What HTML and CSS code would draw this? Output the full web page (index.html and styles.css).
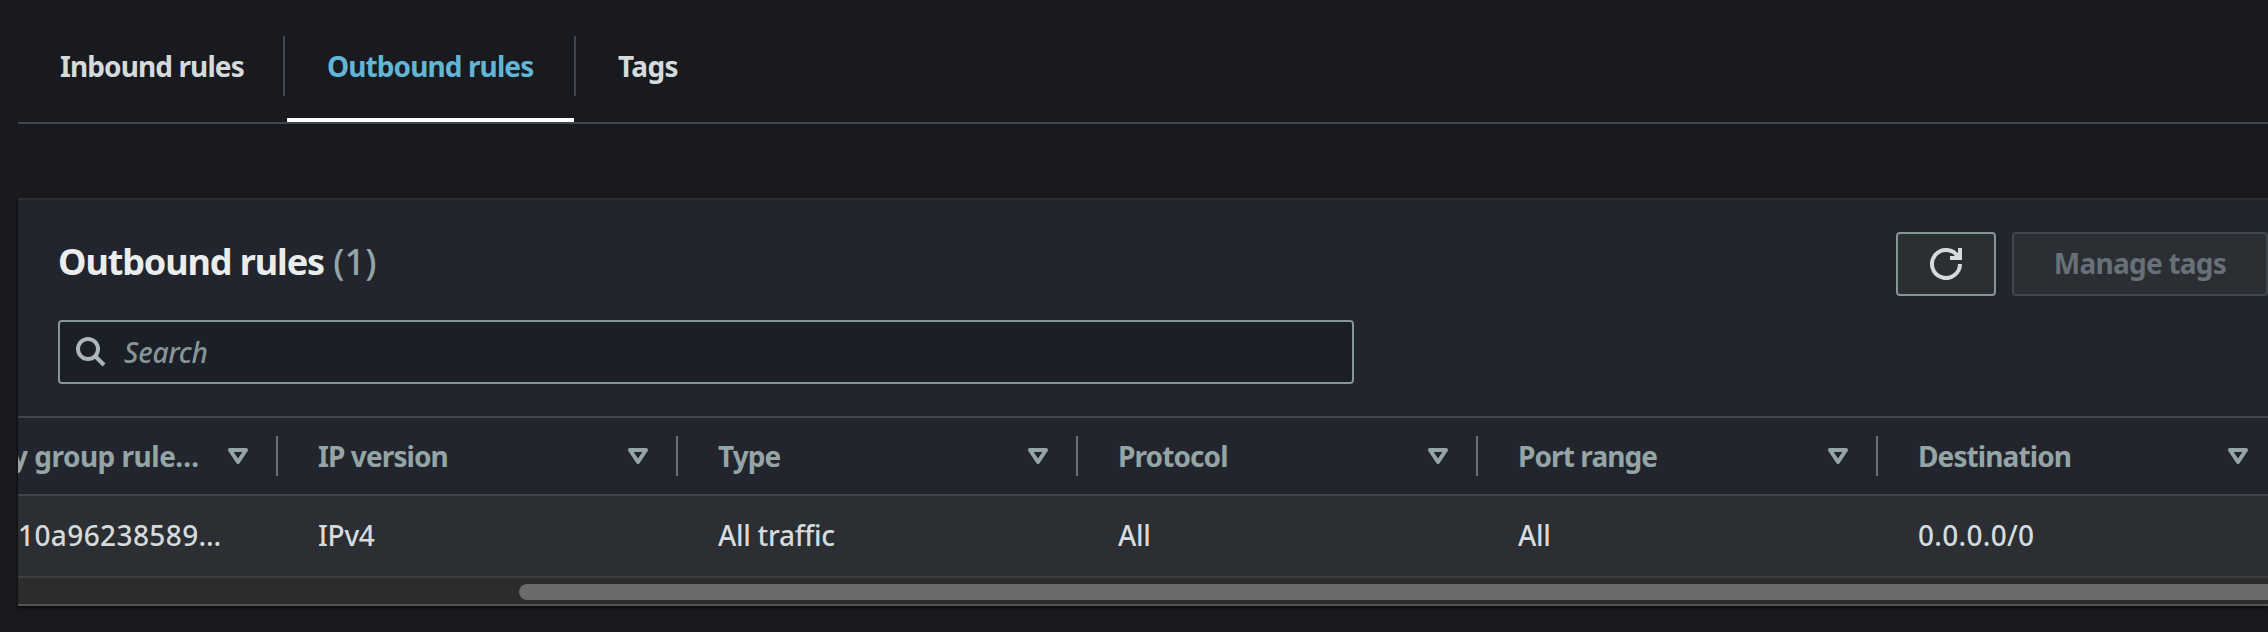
FILE: index.html
```html
<!DOCTYPE html>
<html lang="en">
  <head>
    <meta charset="UTF-8" />
    <meta name="viewport" content="width=device-width, initial-scale=1.0" />
    <title>Outbound rules</title>
    <link rel="stylesheet" href="styles.css">
  </head>
  <body>
    <svg class="sprite" aria-hidden="true">
      <symbol id="sort" viewBox="0 0 20 16">
        <path d="M2 2h16l-8 12z" fill="none" stroke="currentColor" stroke-width="4" stroke-linejoin="round" />
      </symbol>
    </svg>
    <nav class="tabs">
      <a class="tab">Inbound rules</a>
      <a class="tab active">Outbound rules</a>
      <a class="tab">Tags</a>
    </nav>
    <section class="panel">
      <header class="panel-header">
        <h2>Outbound rules <span class="count">(1)</span></h2>
        <div class="actions">
          <button class="btn btn-icon" aria-label="Refresh">
            <svg width="32" height="32" viewBox="0 0 32 32" fill="none" stroke="currentColor" stroke-width="4">
              <path d="M30 16a14 14 0 1 1-1.900-7" />
              <path d="M30 0v10H20" />
            </svg>
          </button>
          <button class="btn btn-text" disabled>Manage tags</button>
        </div>
      </header>
      <div class="search">
        <svg width="30" height="30" viewBox="0 0 30 30" fill="none" stroke="currentColor" stroke-width="4">
          <circle cx="12" cy="12" r="10" />
          <path d="M19 19l9 9" />
        </svg>
        <span class="placeholder">Search</span>
      </div>
      <div class="table">
        <div class="row head">
          <div class="cell first"><span>y group rule…</span><svg class="sort"><use href="#sort" /></svg></div>
          <div class="cell"><span>IP version</span><svg class="sort"><use href="#sort" /></svg></div>
          <div class="cell"><span>Type</span><svg class="sort"><use href="#sort" /></svg></div>
          <div class="cell"><span>Protocol</span><svg class="sort"><use href="#sort" /></svg></div>
          <div class="cell"><span>Port range</span><svg class="sort"><use href="#sort" /></svg></div>
          <div class="cell"><span>Destination</span><svg class="sort"><use href="#sort" /></svg></div>
        </div>
        <div class="row body">
          <div class="cell first">10a96238589…</div>
          <div class="cell">IPv4</div>
          <div class="cell">All traffic</div>
          <div class="cell">All</div>
          <div class="cell">All</div>
          <div class="cell address">0.0.0.0/0</div>
        </div>
      </div>
      <div class="scrollbar"><div class="thumb"></div></div>
    </section>
  </body>
</html>
```

FILE: styles.css
```css
* {
  box-sizing: border-box;
}
body {
  margin: 0;
  padding-left: 18px;
  height: 632px;
  overflow: hidden;
  background: #191a1f;
  color: #d5dbdb;
  font-family: "Noto Sans", "Open Sans", sans-serif;
  font-size: 28px;
  line-height: 40px;
}
.sprite {
  display: none;
}
.tabs {
  display: flex;
  height: 124px;
  padding-top: 36px;
  border-bottom: 2px solid #414550;
}
.tab {
  position: relative;
  width: 291px;
  height: 60px;
  padding: 10px 0 0 42px;
  font-weight: 700;
  letter-spacing: -0.9px;
  white-space: nowrap;
  border-right: 2px solid #414750;
}
.tab:first-child {
  width: 267px;
}
.tab:last-child {
  border-right: 0;
  letter-spacing: -0.6px;
}
.tab.active {
  color: #62b5d5;
}
.tab.active::after {
  content: "";
  position: absolute;
  left: 2px;
  right: 0;
  bottom: -26px;
  height: 4px;
  background: #fff;
}
.panel {
  margin-top: 74px;
  height: 408px;
  background: #22252d;
  border-top: 2px solid #2d2f33;
  box-shadow: 0 2px 4px rgba(0, 0, 0, 0.7);
}
.panel-header {
  display: flex;
  justify-content: space-between;
  height: 120px;
  padding: 32px 0 0 40px;
}
h2 {
  margin: 0;
  padding-top: 5px;
  font-size: 36px;
  line-height: 50px;
  letter-spacing: -1.1px;
  color: #ebeded;
}
.count {
  margin-left: 1px;
  font-weight: 500;
  letter-spacing: 0;
  color: #95a5a6;
}
.actions {
  display: flex;
  gap: 16px;
}
.btn {
  display: flex;
  align-items: center;
  justify-content: center;
  height: 64px;
  padding: 0;
  font: inherit;
  font-weight: 700;
  color: #d5dbdb;
  background: #2b2e33;
  border: 2px solid #879596;
  border-radius: 4px;
}
.btn-icon {
  width: 100px;
}
.btn-text {
  width: 256px;
  padding-bottom: 2px;
  letter-spacing: -0.75px;
  color: #687078;
  border-color: #414750;
}
.search {
  display: flex;
  align-items: center;
  width: 1296px;
  height: 64px;
  margin-left: 40px;
  padding-left: 16px;
  color: #aab7b8;
  background: #1b1f27;
  border: 2px solid #879596;
  border-radius: 4px;
}
.placeholder {
  margin-left: 18px;
  font-style: italic;
  font-weight: 500;
  letter-spacing: -0.2px;
  color: #879596;
}
.table {
  margin-top: 32px;
  overflow: hidden;
  border-top: 2px solid #414750;
}
.row {
  display: flex;
}
.cell {
  display: flex;
  flex: none;
  width: 400px;
  padding-left: 40px;
  white-space: nowrap;
}
.cell.first {
  width: 260px;
  padding-left: 0;
}
.head {
  height: 78px;
  padding-top: 18px;
  font-weight: 700;
  letter-spacing: -0.9px;
  color: #95a5a6;
  border-bottom: 2px solid #414550;
}
.head .cell {
  justify-content: space-between;
  height: 40px;
  padding-right: 28px;
  border-right: 2px solid #687078;
}
/* scrolled partly out of view */
.head .first span {
  margin-left: -6px;
  letter-spacing: -0.5px;
}
.sort {
  width: 20px;
  height: 16px;
  margin-top: 12px;
}
.body {
  height: 82px;
  padding-top: 19px;
  font-weight: 500;
  letter-spacing: -0.3px;
  background: #2b2e33;
  border-bottom: 2px solid #3d3d3d;
}
.body .first {
  letter-spacing: 0.4px;
}
.body .address {
  letter-spacing: 0.3px;
}
.scrollbar {
  height: 28px;
  padding: 6px 0 0 501px;
  background: #2c2c2c;
  border-bottom: 2px solid #555;
}
.thumb {
  height: 16px;
  background: #6b6b6b;
  border-radius: 8px 0 0 8px;
}
```
